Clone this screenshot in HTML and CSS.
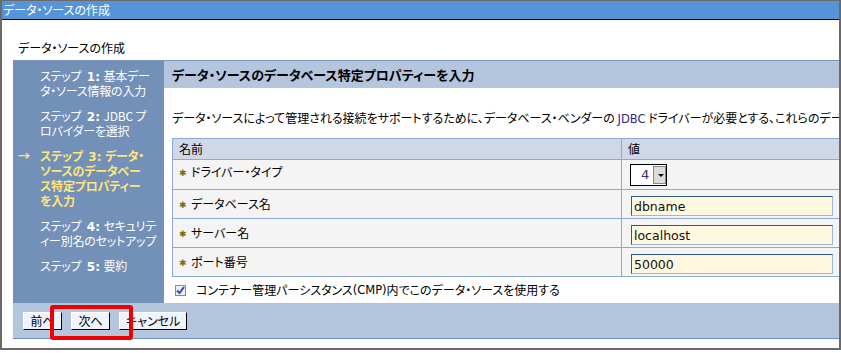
FILE: index.html
```html
<!DOCTYPE html>
<html lang="ja">
<head>
    <meta charset="UTF-8">
    <title>データ・ソースの作成</title>
    <link rel="stylesheet" href="styles.css">
</head>
<body>
    <div class="window">
        <div class="titlebar">データ・ソースの作成</div>
        <div class="page-title">データ・ソースの作成</div>
        <div class="wizard">
            <ul class="steps">
                <li>ステップ <b>1:</b> 基本デー<br>タ・ソース情報の入力</li>
                <li>ステップ <b>2:</b> JDBC プ<br>ロバイダーを選択</li>
                <li class="current"><span class="arrow">&rarr;</span>ステップ <b>3:</b> データ・<br>ソースのデータベー<br>ス特定プロパティー<br>を入力</li>
                <li>ステップ <b>4:</b> セキュリテ<br>ィー別名のセットアップ</li>
                <li>ステップ <b>5:</b> 要約</li>
            </ul>
            <div class="main">
                <h2 class="main-head">データ・ソースのデータベース特定プロパティーを入力</h2>
                <p class="desc">データ・ソースによって管理される接続をサポートするために、データベース・ベンダーの <span class="latin">JDBC</span> ドライバーが必要とする、これらのデータベース特定プロパティーを入力してください。</p>
                <table class="props">
                    <thead>
                        <tr>
                            <th class="col-name">名前</th>
                            <th>値</th>
                        </tr>
                    </thead>
                    <tbody>
                        <tr class="tall">
                            <td><span class="req">&#10033;</span>ドライバー・タイプ</td>
                            <td><span class="select"><span class="select-val">4</span><span class="select-btn"></span></span></td>
                        </tr>
                        <tr>
                            <td><span class="req">&#10033;</span>データベース名</td>
                            <td><input class="field" type="text" value="dbname"></td>
                        </tr>
                        <tr>
                            <td><span class="req">&#10033;</span>サーバー名</td>
                            <td><input class="field" type="text" value="localhost"></td>
                        </tr>
                        <tr>
                            <td><span class="req">&#10033;</span>ポート番号</td>
                            <td><input class="field" type="text" value="50000"></td>
                        </tr>
                    </tbody>
                </table>
                <div class="cmp">
                    <span class="check">
                        <svg width="9" height="9" viewBox="0 0 9 9"><path d="M1 4.5 L3.5 7 L8 1" fill="none" stroke="#2a4fa8" stroke-width="2"/></svg>
                    </span>
                    コンテナー管理パーシスタンス <span class="latin">(CMP)</span> 内でこのデータ・ソースを使用する
                </div>
            </div>
            <div class="footer">
                <button class="btn">前へ</button>
                <button class="btn">次へ</button>
                <button class="btn">キャンセル</button>
                <div class="highlight"></div>
            </div>
        </div>
    </div>
</body>
</html>
```

FILE: styles.css
```css
body { margin: 0; background: #fff; font-family: "Noto Sans CJK JP", sans-serif; font-size: 12px; font-feature-settings: "palt"; overflow: hidden; }
.window { width: 837px; height: 347px; border: 2px solid #6a6a6a; border-top-width: 1px; overflow: hidden; position: relative; }
.titlebar { height: 18px; line-height: 18px; background: #5595d7; color: #fff; padding-left: 1px; border-bottom: 1px solid #000; }
.page-title { margin: 20px 0 0 16px; line-height: 16px; height: 20px; }
.wizard { margin-left: 11px; border-top: 1px solid #7a94c0; display: grid; grid-template-columns: 151px 1fr; grid-template-rows: 242px auto; }
.steps { list-style: none; margin: 0; padding: 7px 0 0 27px; background: #7290b8; color: #fff; display: flex; flex-direction: column; gap: 10px; white-space: nowrap; letter-spacing: -0.2px; }
.steps li { line-height: 15px; position: relative; }
.steps b { font-family: Tahoma, "DejaVu Sans", sans-serif; font-weight: bold; letter-spacing: 0; margin: 0 1px 0 3px; line-height: 0; }
.steps .current { color: #ffe57a; font-weight: bold; }
.arrow { position: absolute; left: -22px; top: 0; letter-spacing: 0; }
.main { min-width: 0; }
.main-head { margin: 0; height: 27px; line-height: 27px; background: #b4c5de; font-size: 13px; font-weight: bold; padding-left: 8px; white-space: nowrap; }
.desc { margin: 22px 0 0 8px; line-height: 16px; white-space: nowrap; }
.latin { font-family: Tahoma, "DejaVu Sans", sans-serif; font-size: 11.5px; line-height: 0; }
.desc .latin { color: #2a2a8a; }
.props { margin: 12px 0 0 8px; width: 720px; border-collapse: collapse; }
.props th, .props td { border: 1px solid #8fa8d6; padding: 0 0 0 6px; text-align: left; font-weight: normal; }
.props th { background: #d0d8e7; line-height: 20px; }
.col-name { width: 442px; }
.props td { background: #f4f4f4; line-height: 27px; }
.props .tall td { line-height: 16px; height: 25px; vertical-align: top; padding-top: 4px; }
.req { color: #7d6a14; font-size: 9px; margin-right: 4px; vertical-align: 1px; }
.select { display: inline-flex; align-items: center; gap: 4px; margin-left: 2px; width: 35px; height: 20px; border: 1px solid #000; background: #fff; vertical-align: top; }
.select-val { font-family: Tahoma, "DejaVu Sans", sans-serif; font-size: 13px; line-height: 16px; color: #3a2a7a; margin-left: 10px; }
.select-btn { width: 14px; height: 16px; border: 1px solid #888; background: #dcdcdc; position: relative; }
.select-btn::after { content: ""; position: absolute; left: 4px; top: 7px; border: 3px solid transparent; border-top: 3px solid #000; border-bottom: 0; }
.field { margin-left: 3px; width: 196px; height: 16px; padding: 1px 2px; border: 1px solid #9ab8dc; border-top-color: #2d5a96; border-left-color: #2d5a96; background: #fff8e0; font-family: Tahoma, "DejaVu Sans", sans-serif; font-size: 12.5px; color: #111; vertical-align: middle; }
.cmp { margin: 5px 0 0 11px; line-height: 16px; white-space: nowrap; display: flex; align-items: center; }
.check { width: 9px; height: 9px; border: 1px solid #8a8a8a; background: #eef; display: inline-flex; margin-right: 10px; }
.check svg { display: block; }
.footer { grid-column: 1 / 3; height: 35px; background: #b4c5de; border-bottom: 1px solid #6b8fc4; display: flex; align-items: center; gap: 9px; padding-left: 10px; position: relative; }
.btn { height: 18px; min-width: 39px; padding: 0 6px; font-family: inherit; font-size: 12px; font-feature-settings: "palt"; background: #eef3fc; border: 1px solid #fff; border-right-color: #000; border-bottom-color: #000; line-height: 15px; }
.highlight { position: absolute; left: 37px; top: 2px; width: 75px; height: 27px; border: 4px solid #e00; border-radius: 3px; }
```
